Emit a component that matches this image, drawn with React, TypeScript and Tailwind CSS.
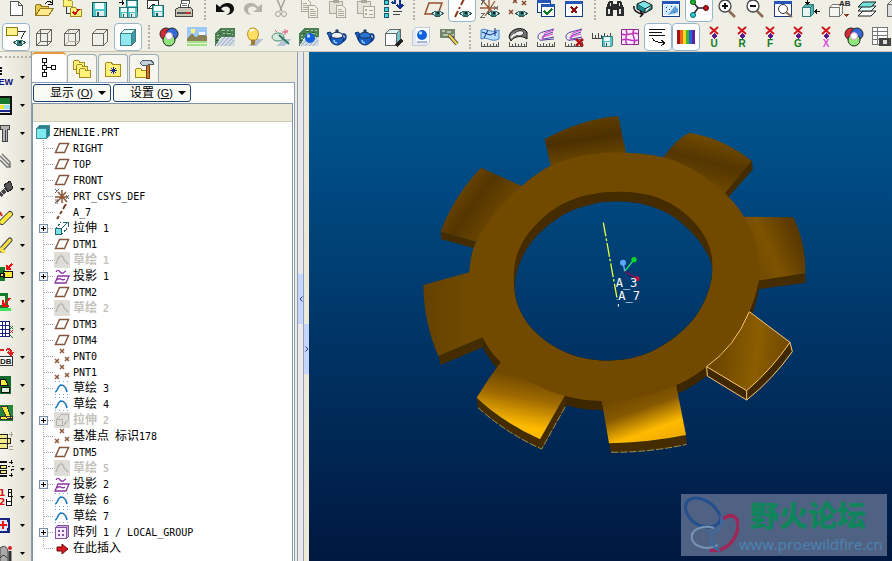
import React from 'react';

type Point = [number, number];

interface ToolItem {
  label: string;
  icon: React.ReactNode;
  active?: boolean;
}

interface TreeItem {
  label: string;
  kind: string;
  expandable?: boolean;
  muted?: boolean;
}

// Shared pieces of the toolbar drawings

const Eye = () => (
  <g>
    <path d="M8 15.5L11 13h5l3 2.5-3 2.5h-5z" fill="#cfe3df" stroke="#2d5a58" />
    <path d="M11 13h5v5h-5z" fill="#2f7a78" />
    <path d="M13 14h2v2h-2z" fill="#001a1a" />
  </g>
);

const Disk = ({ x, y, s = 1 }: { x: number; y: number; s?: number }) => (
  <g transform={`translate(${x} ${y}) scale(${s})`}>
    <path d="M.5 .5h14v14h-14z" fill="#4fc6c6" stroke="#14585c" />
    <path d="M3 1h9v6H3z" fill="#f4ffff" />
    <path d="M4 9h8v5H4z" fill="#e5ecec" />
    <path d="M5 10h2v4H5z" fill="#14585c" />
  </g>
);

const Folder = ({ x, y, s = 1 }: { x: number; y: number; s?: number }) => (
  <path transform={`translate(${x} ${y}) scale(${s})`} d="M.5 9.5v-8l1-1h4l1 1.5h5v7.5z" fill="#fff27a" stroke="#a58a1c" />
);

const Ruler = () => <path d="M1.5 15v4.5h17V15M4.5 17v2M7.5 16v3M10.5 17v2M13.5 16v3M16.5 17v2" fill="none" stroke="#555" />;

const Texture = () => (
  <g>
    <path d="M0 20V6l5-5h15v9H6z" fill="#4c7f55" />
    <path d="M6 10h14v9H1z" fill="#d5dde8" />
    <path d="M2 19l8-9M6 19l8-9M10 19l8-9M14 19l5-6" stroke="#98a6bb" shapeRendering="auto" />
    <path d="M7 3h3M12 3h2M16 3h2M8 6h2M12 6h4M2 8h2M2 11h2M17 7h1" stroke="#a3cb93" />
    <path d="M8 4h2M13 5h3M4 6h2M10 8h2M1 13h2" stroke="#2a5936" />
  </g>
);

const Cube = ({ fill = 'none', top = 'none', side = 'none', stroke = '#666' }) => (
  <g stroke={stroke}>
    <path d="M2.5 6.5h11v12h-11z" fill={fill} />
    <path d="M2.5 6.5l4-4h11l-4 4z" fill={top} />
    <path d="M13.5 18.5l4-4v-12l-4 4z" fill={side} />
  </g>
);

const Ball = ({ x, y, r = 5 }: { x: number; y: number; r?: number }) => (
  <g shapeRendering="auto">
    <circle cx={x} cy={y} r={r} fill="#1262e0" />
    <circle cx={x - 1.5} cy={y - 2} r={r / 3} fill="#b7dcff" />
  </g>
);

const Teapot = ({ lid = '#2a74d4' }: { lid?: string }) => (
  <g shapeRendering="auto">
    <path d="M5 15C2 13 3 10 0 6l3-1c2 1 2 3 3 4z" fill="#1960c9" stroke="#0a2c66" />
    <path d="M14 8c5-3 7 3 1 7" fill="none" stroke="#0e3f95" strokeWidth="2" />
    <ellipse cx="10" cy="12" rx="6.5" ry="6" fill="#1960c9" stroke="#0a2c66" />
    <path d="M4 9c1-5 11-5 12 0-2 3-10 3-12 0z" fill={lid} stroke="#1b2d4e" />
    <circle cx="10" cy="4" r="1.8" fill="#24406e" />
    <path d="M7 13c0 2 1 3 3 3" stroke="#8fcaff" strokeWidth="1.5" fill="none" />
  </g>
);

const ColorRings = () => (
  <g shapeRendering="auto" stroke="#222">
    <circle cx="7" cy="7" r="6" fill="#d52b35" />
    <circle cx="13" cy="7" r="6" fill="#3467d8" />
    <circle cx="10" cy="13" r="6" fill="#8ce67a" />
    <circle cx="10" cy="9" r="3.5" fill="#fff" stroke="#d6a5c9" />
  </g>
);

const Flow = () => (
  <g shapeRendering="auto" fill="none">
    <path d="M18 2L7 5C3 6 2 8 2 10s2 4 5 3l11-1M17 5L9 8c-3 1-4 4-1 4l10-2" stroke="#4a3ea8" />
    <path d="M17 7L7 10M18 3l-9 3-3 7" stroke="#e23adf" />
  </g>
);

const Magnifier = ({ sign }: { sign: string }) => (
  <g shapeRendering="auto" fill="none">
    <path d="M12 13l6 6" stroke="#8c6a4f" strokeWidth="2.5" />
    <circle cx="8" cy="8" r="6" fill="#fff" stroke="#444" strokeWidth="1.3" />
    <path d={sign} stroke="#111" strokeWidth="2" />
  </g>
);

const Window = () => (
  <g>
    <path d="M1.5 3.5h17v15h-17z" fill="#fff" stroke="#173d86" />
    <path d="M1 3h18v3H1z" fill="#2356b8" />
  </g>
);

const DragMark = ({ letter, color }: { letter: string; color: string }) => (
  <g>
    <path d="M6 0l8 7M14 0L6 7" stroke="#d3141c" strokeWidth="2" shapeRendering="auto" />
    <path d="M10 6l3 3-3 3-3-3z" fill="#5b1a8b" />
    <text x="10" y="20" textAnchor="middle" fontSize="10" fontWeight="bold" fontFamily="Liberation Sans" fill={color}>{letter}</text>
  </g>
);

const Sheet = ({ x, y }: { x: number; y: number }) => (
  <g transform={`translate(${x} ${y})`} stroke="#aaa89b">
    <path d="M.5 .5h6l3 3v9h-9z" fill="#f2f1e8" />
    <path d="M2 4.5h4M2 6.5h6M2 8.5h6M2 10.5h6" />
  </g>
);

const fileTools: ToolItem[] = [
  { label: 'New', icon: <path d="M4.5 3.5h8l4 4v10h-12zM12.5 3.5v4h4" fill="#fff" stroke="#555" /> },
  {
    label: 'Open',
    icon: (
      <g>
        <path d="M1.5 17.5v-10l1-1h4l1 2h7v9z" fill="#e6c84e" stroke="#95761a" />
        <path d="M1.5 17.5l5-7h13l-5 7z" fill="#ffe98a" stroke="#95761a" />
        <path d="M11 6c2-3 5-3 7-1M18 2v4h-4" stroke="#111" fill="none" />
      </g>
    ),
  },
  {
    label: 'Set working directory',
    icon: (
      <g>
        <Folder x={1} y={1} s={0.8} />
        <path d="M4.5 9v6.5H8" stroke="#333" fill="none" />
        <Folder x={8} y={9} />
        <path d="M11 14l2 2 4-5" stroke="#c4161c" strokeWidth="2" fill="none" />
      </g>
    ),
  },
  { label: 'Save', icon: <Disk x={2} y={4} /> },
  {
    label: 'Save all',
    icon: (
      <g>
        <Disk x={8} y={2} s={0.8} />
        <Disk x={1} y={9} s={0.7} />
        <Disk x={9} y={9} s={0.7} />
        <path d="M1 4h5M4 2v5M6 4L4 7" stroke="#111" />
      </g>
    ),
  },
  {
    label: 'Save a copy',
    icon: (
      <g>
        <path d="M1.5 2.5h11v8h-11z" fill="#fff" stroke="#333" />
        <path d="M3 10l4-4 3 2" fill="none" stroke="#333" />
        <Disk x={6} y={7} s={0.8} />
      </g>
    ),
  },
  {
    label: 'Print',
    icon: (
      <g>
        <path d="M6.5 10l1-8h8l-1 8z" fill="#fff" stroke="#555" />
        <path d="M8 5h5M8 7h5" stroke="#777" />
        <path d="M1.5 18.5v-7l3-2h12l2 2v7z" fill="#c9c6b8" stroke="#444" />
        <path d="M3 14h14v2H3z" fill="#555" />
        <path d="M12 14h4v2h-4z" fill="#d8262a" />
      </g>
    ),
  },
];

const editTools: ToolItem[] = [
  { label: 'Undo', icon: <path d="M1 6v8h9l-4-3c3-4 9-3 9 1 0 3-2 4-4 5 5 0 8-3 8-6 0-7-10-8-14-2z" fill="#111" shapeRendering="auto" /> },
  { label: 'Redo', icon: <path d="M19 6v8h-9l4-3C11 7 5 8 5 12c0 3 2 4 4 5-5 0-8-3-8-6C1 4 11 3 15 9z" fill="#b5b3a8" shapeRendering="auto" /> },
  {
    label: 'Cut',
    icon: (
      <g stroke="#a5a399" fill="none" shapeRendering="auto">
        <path d="M6 1l5 12M14 1L9 13" strokeWidth="1.5" />
        <circle cx="7" cy="16" r="2.5" />
        <circle cx="13" cy="16" r="2.5" />
      </g>
    ),
  },
  { label: 'Copy', icon: <g><Sheet x={2} y={1} /><Sheet x={9} y={7} /></g> },
  {
    label: 'Paste',
    icon: (
      <g>
        <path d="M2.5 3.5h13v12h-13z" fill="#e4e2d6" stroke="#aaa89b" />
        <path d="M6 2h6v3H6z" fill="#aaa89b" />
        <Sheet x={9} y={7} />
      </g>
    ),
  },
  {
    label: 'Paste special',
    icon: (
      <g>
        <path d="M2.5 3.5h13v12h-13z" fill="#e4e2d6" stroke="#aaa89b" />
        <path d="M8.5 8.5h11v11h-11z" fill="#f2f1e8" stroke="#aaa89b" />
        <path d="M6 2h6v3H6zM10 11h2v2h-2zM10 15h2v2h-2z" fill="#aaa89b" />
        <path d="M14 12h4M14 16h4" stroke="#aaa89b" />
      </g>
    ),
  },
  {
    label: 'Regenerate',
    icon: (
      <g>
        <path d="M1.5 2.5h4v4h-4zM1.5 9.5h4v4h-4zM1.5 15.5h4v4h-4z" fill="#3fd3dc" stroke="#175a70" />
        <path d="M9 5h3V2M17 2v5h3M11 6l-2-2M14 7l3 3 3-3" stroke="#15318f" strokeWidth="2" fill="none" />
        <path d="M10 13.5h9M10 16.5h7" stroke="#444" />
      </g>
    ),
  },
];

const datumTools: ToolItem[] = [
  { label: 'Datum planes', icon: <g><path d="M5 5h13l-4 11H1z" fill="none" stroke="#9a4f2c" strokeWidth="1.5" shapeRendering="auto" /><Eye /></g> },
  { label: 'Datum axes', active: true, icon: <g><path d="M12 1L9 7M8 9l-1 2M6 13l-3 6" stroke="#8a3e1e" strokeWidth="2" shapeRendering="auto" /><Eye /></g> },
  {
    label: 'Coordinate systems',
    icon: (
      <g>
        <path d="M3 3l12 14M15 3L5 18M0 10h18M9 2v14" stroke="#9a5a38" strokeWidth="1.3" shapeRendering="auto" />
        <path d="M1 1l2 3M5 1L1 7M14 8l4 4M18 8l-4 4M1 15h4l-4 4h4" stroke="#666" fill="none" />
        <Eye />
      </g>
    ),
  },
  {
    label: 'Datum points',
    icon: (
      <g>
        <path d="M5 1l4 4M9 1L5 5M14 3l4 4M18 3l-4 4M1 12l4 4M5 12l-4 4" stroke="#8a4a2a" strokeWidth="1.5" shapeRendering="auto" />
        <Eye />
      </g>
    ),
  },
  {
    label: 'Activate window',
    icon: (
      <g>
        <path d="M1.5 2.5h13v12h-13z" fill="#fff" stroke="#173d86" />
        <path d="M1 2h14v3H1z" fill="#2356b8" />
        <path d="M5.5 6.5h13v12h-13z" fill="#fff" stroke="#173d86" />
        <path d="M5 6h14v3H5z" fill="#2356b8" />
        <path d="M8 13l3 3 5-5" fill="none" stroke="#127a22" strokeWidth="2" />
      </g>
    ),
  },
  { label: 'Close window', icon: <g><Window /><path d="M7 9l6 6M13 9l-6 6" stroke="#8f1010" strokeWidth="2" /></g> },
];

const viewTools: ToolItem[] = [
  {
    label: 'Find',
    icon: (
      <g>
        <path d="M1 18V10l3-7h4v3h4V3h4l3 7v8h-7v-6H8v6z" fill="#2b2b2b" />
        <path d="M3 11h2v5H3zM14 11h2v5h-2zM5 5h1v3H5zM14 5h1v3h-1z" fill="#dfe6e6" />
      </g>
    ),
  },
  {
    label: 'Spin center',
    icon: (
      <g shapeRendering="auto">
        <path d="M4 6l7-3 8 4-7 4z" fill="#7fe6e8" stroke="#111" />
        <path d="M4 6v5l8 4V11M12 15l7-4V7" fill="#1a8e98" stroke="#111" />
        <path d="M1 8c-1 4 3 7 8 8M7 13l3 3-3 3" fill="none" stroke="#111" strokeWidth="1.5" />
      </g>
    ),
  },
  {
    label: 'Repaint',
    icon: (
      <g>
        <Window />
        <path d="M3 7h14v10H3z" fill="#d6ecff" />
        <path d="M7 17l7-9 3 3v3z" fill="#5a9fd8" shapeRendering="auto" />
        <path d="M5 9h1M8 11h1M5 13h1M10 8h1M13 14h1" stroke="#173d86" />
      </g>
    ),
  },
  {
    label: 'Orientation center',
    active: true,
    icon: (
      <g shapeRendering="auto">
        <path d="M4 4l5 6-5 7M9 10h8" stroke="#222" strokeWidth="1.5" fill="none" />
        <circle cx="4" cy="4" r="2.5" fill="#1cb62c" stroke="#0a5312" />
        <circle cx="4" cy="17" r="2.5" fill="#24cfd8" stroke="#0c5f66" />
        <circle cx="17" cy="10" r="2.5" fill="#c3161c" stroke="#5c0a0c" />
      </g>
    ),
  },
  { label: 'Zoom in', icon: <Magnifier sign="M5 8h6M8 5v6" /> },
  { label: 'Zoom out', icon: <Magnifier sign="M5 8h6" /> },
  {
    label: 'Refit',
    icon: (
      <g>
        <Window />
        <g shapeRendering="auto">
          <circle cx="10" cy="11" r="4.5" fill="#fff" stroke="#333" />
          <path d="M13 14l6 5" stroke="#8c6a4f" strokeWidth="2" />
        </g>
      </g>
    ),
  },
  {
    label: 'Reorient',
    icon: (
      <g>
        <path d="M1.5 9.5h8v9h-8z" fill="#e9f5f5" stroke="#2a7a7a" />
        <path d="M1.5 9.5l3-3h8l-3 3zM9.5 18.5l3-3v-9l-3 3z" fill="#5cb5b5" stroke="#2a7a7a" />
        <path d="M6.5 1v5M4.5 4l2 2 2-2M19 13.5h-5M16 11.5l-2 2 2 2" stroke="#111" fill="none" />
      </g>
    ),
  },
  {
    label: 'Saved views',
    icon: (
      <g>
        <path d="M.5 9.5h10v9h-10zM.5 9.5l3-3h10v9l-3 3" fill="#f5f5f2" stroke="#777" />
        <text x="10" y="8" fontSize="8" fontWeight="bold" fontFamily="Liberation Sans" fill="#222">AB</text>
        <path d="M15 16h5l-2.5 3z" fill="#8a3e1e" />
      </g>
    ),
  },
  {
    label: 'Layers',
    icon: (
      <g stroke="#222" shapeRendering="auto">
        <path d="M1 18l5-5h13l-5 5z" fill="#fff" />
        <path d="M1 13l5-5h13l-5 5z" fill="#dff" />
        <path d="M1 9l5-5h13l-5 5z" fill="#6fe0dc" />
      </g>
    ),
  },
  { label: 'View manager', icon: <Cube fill="#ddd" /> },
];

const displayTools: ToolItem[] = [
  {
    label: 'Annotation display',
    active: true,
    icon: (
      <g>
        <path d="M.5 .5h11v8H.5z" fill="#fff48c" stroke="#8c7c12" />
        <path d="M12 4.5h7l-4 7" stroke="#333" fill="none" />
        <Eye />
      </g>
    ),
  },
  { label: 'Wireframe', icon: <g><Cube /><path d="M6.5 2.5v12h11M6.5 14.5l-4 4" stroke="#666" fill="none" /></g> },
  { label: 'Hidden line', icon: <g><Cube /><path d="M6.5 2.5v12h11M6.5 14.5l-4 4" stroke="#b0aea2" fill="none" /></g> },
  { label: 'No hidden', icon: <Cube /> },
  { label: 'Shading', active: true, icon: <Cube fill="#8fe9ee" top="#e8ffff" side="#3a99a3" stroke="#3f7f88" /> },
];

const renderTools: ToolItem[] = [
  { label: 'Appearance', icon: <ColorRings /> },
  {
    label: 'Scene',
    icon: (
      <g>
        <path d="M0 0h20v12H0z" fill="#9cc9f5" />
        <path d="M0 11l5-4 4 3 6-5 5 5v4H0z" fill="#8a8256" />
        <path d="M0 14h20v6H0z" fill="#a6dd88" />
        <path d="M0 16h20M0 19h20" stroke="#e5f7d8" />
        <circle cx="6" cy="4" r="2.5" fill="#fff27a" />
        <path d="M12 5h6v3h-6z" fill="#f3f7fb" />
      </g>
    ),
  },
  { label: 'Room', icon: <Texture /> },
  {
    label: 'Lights',
    icon: (
      <g>
        <path d="M5 19l7-7h8l-7 7z" fill="#b7c4d8" />
        <g shapeRendering="auto">
          <path d="M7 13c-4-4-3-12 3-12s7 8 3 12z" fill="#ffe067" stroke="#b98b17" />
          <path d="M8 13h4v5H8z" fill="#a17a35" />
          <path d="M7 4c1-1 2-2 4-1" stroke="#fff" fill="none" strokeWidth="2" />
        </g>
      </g>
    ),
  },
  {
    label: 'Effects',
    icon: (
      <g>
        <path d="M5 19l7-7h8l-7 7z" fill="#b7c4d8" />
        <g shapeRendering="auto">
          <ellipse cx="7" cy="10" rx="6" ry="4" fill="#d6eadb" stroke="#498a73" />
          <path d="M8 8l10 9" stroke="#2f7a66" strokeWidth="2" />
          <path d="M14 2v6M11 5h6M4 3l2 2M17 3l-2 2" stroke="#db5b78" />
        </g>
      </g>
    ),
  },
  { label: 'Render room', icon: <g><Texture /><Ball x={11} y={11} r={5} /></g> },
  { label: 'Render setup', icon: <Teapot lid="#f2f4f6" /> },
  { label: 'Render window', icon: <Teapot /> },
  { label: 'Perspective', icon: <g><Cube fill="#fff" top="#d9f4f6" side="#6fc4cb" /><path d="M13 19l6-6" stroke="#222" strokeWidth="3" /></g> },
  {
    label: 'Real time',
    icon: (
      <g>
        <path d="M1.5 3.5l3-3h14v15l-3 3h-14z" fill="#e6e9ef" stroke="#c5cbd6" />
        <path d="M5 1h13v14H5z" fill="#fbfcff" />
        <Ball x={11} y={8} r={5} />
        <path d="M6 15h10" stroke="#a3b7d8" strokeWidth="2" />
      </g>
    ),
  },
  {
    label: 'Image editor',
    icon: (
      <g>
        <path d="M1 2h15v9H1z" fill="#73856c" />
        <path d="M3 4h3M8 5h4M4 8h5M12 8h3" stroke="#b9c6aa" strokeWidth="2" />
        <path d="M10 8l8 9" stroke="#444" strokeWidth="4" shapeRendering="auto" />
        <path d="M10 8l8 9" stroke="#f2d648" strokeWidth="2" shapeRendering="auto" />
      </g>
    ),
  },
];

const analysisTools: ToolItem[] = [
  {
    label: 'Curvature',
    icon: (
      <g>
        <path d="M1 3c5-3 8 4 18 0v9c-8 4-11-3-18 0z" fill="#b5dbff" stroke="#4782c9" shapeRendering="auto" />
        <path d="M4 11l4-8M2 5l8 3 7-3M15 1v8" stroke="#11307a" fill="none" shapeRendering="auto" />
        <Ruler />
      </g>
    ),
  },
  {
    label: 'Reflection',
    icon: (
      <g>
        <g shapeRendering="auto">
          <path d="M1 10c1-9 14-11 18-5v7c-5-4-13-3-16 2z" fill="#777" stroke="#111" />
          <path d="M7 6c3-3 8-3 9 0-3 4-7 4-9 0z" fill="#eee" stroke="#333" />
          <path d="M3 11c2-3 4-4 7-4" stroke="#eee" strokeWidth="2" fill="none" />
        </g>
        <Ruler />
      </g>
    ),
  },
  { label: 'Sections', icon: <g><Flow /><Ruler /></g> },
  { label: 'Delete sections', icon: <g><Flow /><Ruler /><path d="M12 12l7 7M19 12l-7 7" stroke="#b31217" strokeWidth="2.5" shapeRendering="auto" /></g> },
  { label: 'Saved analysis', icon: <g><path d="M.5 6v5.5h18V6M3.5 8v3M6.5 6v5M9.5 8v3M12.5 6v5M15.5 8v3" stroke="#444" fill="none" /><Disk x={10} y={9} s={0.7} /></g> },
  {
    label: 'Mesh',
    icon: (
      <g fill="none" shapeRendering="auto">
        <path d="M1.5 2.5h17v15h-17z" fill="#f7eef9" stroke="#8b2a8f" />
        <path d="M6 3c3 5-3 9 1 14M14 3c-4 5 3 8 0 14M2 7c5 3 11-3 16 0M2 13c6-3 10 3 16 0" stroke="#bd35c0" strokeWidth="1.5" />
      </g>
    ),
  },
  { label: 'Wrap', active: true, icon: <path d="M1 2.5h16M1 5.5h13M1 8.5h16M4 11c2 4 6 5 13 5M13 13l4 3-4 3" fill="none" stroke="#111" /> },
  {
    label: 'Spectrum',
    active: true,
    icon: (
      <g>
        <path d="M1 3h3v14H1z" fill="#a31515" />
        <path d="M4 3h3v14H4z" fill="#f0641e" />
        <path d="M7 3h3v14H7z" fill="#f5d821" />
        <path d="M10 3h3v14h-3z" fill="#43b535" />
        <path d="M13 3h3v14h-3z" fill="#2464d6" />
        <path d="M16 3h3v14h-3z" fill="#5c2499" />
      </g>
    ),
  },
  { label: 'U', icon: <DragMark letter="U" color="#137a1b" /> },
  { label: 'R', icon: <DragMark letter="R" color="#137a1b" /> },
  { label: 'F', icon: <DragMark letter="F" color="#137a1b" /> },
  { label: 'G', icon: <DragMark letter="G" color="#137a1b" /> },
  { label: 'X', icon: <DragMark letter="X" color="#d94fe0" /> },
  { label: 'Colors', icon: <ColorRings /> },
  {
    label: 'Snapshot table',
    icon: (
      <g>
        <path d="M.5 .5h15v17H.5zM.5 4.5h15M.5 8.5h15M.5 12.5h15M5.5 1v17" fill="#fff" stroke="#777" />
        <path d="M7 11h12v8H7z" fill="#444" />
        <circle cx="13" cy="15" r="2.5" fill="#ddd" />
      </g>
    ),
  },
];

// Left column; the drawings run under the window edge on the left
const sideTools: ToolItem[] = [
  {
    label: 'New part',
    icon: (
      <g>
        <path d="M0 1h2M0 4h2M0 7h2" stroke="#111" strokeWidth="2" />
        <text x="-8" y="18" fontSize="9" fontWeight="bold" fontFamily="Liberation Sans" fill="#10107a">NEW</text>
      </g>
    ),
  },
  { label: 'Mold base', icon: <g><path d="M0 2h12M0 19h12M11 2v17" stroke="#111" strokeWidth="2" /><path d="M0 3h10v6H0z" fill="#157a2c" /><path d="M0 10h4v4H0z" fill="#f2e13a" /><path d="M4 10h6v4H4z" fill="#90e0ee" /><path d="M0 15h10v2H0z" fill="#1b2a8f" /></g> },
  { label: 'Screw', icon: <path d="M.5 2.5h9v4h-2v12h-5v-12h-2zM5.5 7v11" fill="#b5b5b5" stroke="#444" /> },
  { label: 'Pins', icon: <path d="M0 5l10 10M0 9l7 7M2 3l8 8M10 11v5H6" fill="none" stroke="#777" strokeWidth="1.5" shapeRendering="auto" /> },
  { label: 'Bolt', icon: <g><path d="M0 17l7-8" stroke="#444" strokeWidth="4" /><path d="M4 6l6-4 3 7-5 4z" fill="#555" stroke="#222" /><path d="M1 13l3 3M4 10l3 3" stroke="#bbb" /></g> },
  { label: 'Ejector', icon: <g shapeRendering="auto"><path d="M2 15l8-8" stroke="#444" strokeWidth="6" strokeLinecap="round" /><path d="M2 15l8-8" stroke="#ffe93b" strokeWidth="4" strokeLinecap="round" /><path d="M0 5l2 4" stroke="#d23418" strokeWidth="2" /></g> },
  { label: 'Sleeve', icon: <g shapeRendering="auto"><path d="M1 15l9-10" stroke="#444" strokeWidth="5" strokeLinecap="round" /><path d="M0 14l4 3M1 15l9-10" stroke="#f5e048" strokeWidth="3" strokeLinecap="round" /></g> },
  { label: 'Locating ring', icon: <g><path d="M0 4h5v14H0z" fill="#157a2c" /><path d="M3.5 8.5h9v6h-9zM0 10.5h4v3H0z" fill="#ffe93b" stroke="#111" /><path d="M12 1L7 6M7 2v4h4" stroke="#e11" strokeWidth="2" fill="none" /></g> },
  { label: 'Cooling', icon: <g><path d="M0 2h8v16H0z" fill="#157a2c" /><path d="M0 5h5v9H0z" fill="#f1f4e4" /><path d="M0 17h11v3H0z" fill="#42e05b" /><path d="M10 7l-6 7M3 9v6h6" stroke="#e11" strokeWidth="2" fill="none" /></g> },
  { label: 'Drawing grid', icon: <g><path d="M0 2.5h9v15H0M0 6.5h9M0 10.5h9M0 14.5h9M2.5 2v15M5.5 2v15" fill="#fff" stroke="#1a2380" /><path d="M10 7l3 3M13 7l-3 3M10 16l3 3" stroke="#157a2c" /><path d="M10 11l3 3M13 11l-3 3" stroke="#c22" /></g> },
  { label: 'Database', icon: <g><path d="M0 3h4M6 3c4-2 6 1 5 4M8 5l3 3 2-3" stroke="#d22" strokeWidth="2" fill="none" /><path d="M-2.5 9.5h15v9h-15z" fill="#fff" stroke="#333" /><text x="0" y="17" fontSize="8" fontFamily="Liberation Sans" fontWeight="bold" fill="#111">DB</text></g> },
  { label: 'Slider', icon: <g><path d="M0 1h11v18H0z" fill="#146b2b" /><path d="M0 4h5l3 6H0z" fill="#ffe93b" stroke="#111" /><path d="M1.5 12.5h8v5h-8z" fill="#dfeee0" stroke="#111" /></g> },
  { label: 'Lifter', icon: <g><path d="M0 2h13v16H0z" fill="#25853a" /><path d="M1 3h6l4 12H7zM0 13h12v3H0z" fill="#ffe93b" stroke="#333" /></g> },
  { label: 'Opening', icon: <g><path d="M0 3.5h7v14H0M0 7.5h10v5H0" fill="#f2e98a" stroke="#222" /><path d="M9 3h4M11 1v5M9 15h4M9 18h4" stroke="#aaa58c" /></g> },
  { label: 'Check', icon: <g><path d="M0 3h7M0 17h7" stroke="#111" strokeWidth="2" /><path d="M0 6.5h6v3H0zM0 11.5h6v3H0z" fill="#f5ea79" stroke="#111" /><path d="M9 3h4M11 1v4M8 7h2M12 7h2v3h-3v2M9 16h4M11 14v4" stroke="#111" fill="none" /></g> },
  { label: 'Numbering', icon: <g><text x="-1" y="9" fontSize="9" fontWeight="bold" fontFamily="DejaVu Sans" fill="#d11">1</text><text x="-1" y="18" fontSize="9" fontWeight="bold" fontFamily="DejaVu Sans" fill="#d11">2</text><path d="M6.5 11.5v7h5v-16h-3v7h4M7 14.5h5M8 5.5h4" fill="#fff" stroke="#111" /></g> },
  { label: 'Layout', icon: <g><path d="M0 3.5h9v13H0" fill="#dfe5ff" stroke="#1a2380" strokeWidth="2" /><path d="M0 10h7M3 6v8" stroke="#e11" strokeWidth="2" /><path d="M7 4h3v3H7zM7 13h3v3H7z" fill="#1a2380" /></g> },
  { label: 'Options', icon: <g shapeRendering="auto"><path d="M0 5c5-4 8 0 8 5v9H0z" fill="#aaa" stroke="#444" /><path d="M10 8v11" stroke="#333" strokeWidth="3" /><circle cx="10" cy="5" r="2" fill="#d22" /><path d="M0 15c3-4 5-3 7 0" stroke="#333" fill="none" /></g> },
];

const treeIcons: Record<string, React.ReactNode> = {
  plane: <path d="M5.5 3.5h9l-4 9h-9z" fill="none" stroke="#85583d" strokeWidth="1.5" shapeRendering="auto" />,
  csys: <g shapeRendering="auto"><path d="M1 9h13M8 2v13M4 4l9 10M12 4L3 14" stroke="#8c5636" strokeWidth="1.5" /><path d="M1 1l2 2M5 1L1 5M12 7l3 4M15 7l-3 4M1 12h3l-3 3h3" stroke="#666" fill="none" /></g>,
  axis: <path d="M12 0l-3 5M8 7L6 10M5 12l-2 3" stroke="#7a4428" strokeWidth="2" shapeRendering="auto" />,
  extrude: <g><path d="M1.5 8.5h6v6h-6z" fill="#79e3e6" stroke="#28626b" /><path d="M2 8l5-6M8 14l6-7" stroke="#28626b" strokeDasharray="2 1" /><path d="M8 8l6-6M9 2h5v5" stroke="#28626b" fill="none" /></g>,
  sketchOff: <g><path d="M0 0h16v16H0z" fill="#deddd8" /><path d="M2 12c3-10 7-10 8-4l4 4" stroke="#bab9b4" fill="none" strokeWidth="1.5" shapeRendering="auto" /></g>,
  extrudeOff: <g><path d="M0 0h16v16H0z" fill="#deddd8" /><path d="M2.5 7.5h6v6h-6zM3 7l5-5h6v6l-5 6" stroke="#b4b3ae" fill="none" /></g>,
  project: <g shapeRendering="auto" fill="none" stroke="#8a35a3" strokeWidth="1.3"><path d="M2 4c3-5 4 3 7 1l3-2" /><path d="M4 8h11l-3 7H1z" /><path d="M3 12c3-4 4 2 8-1" /></g>,
  points: <path d="M6 1l4 4M10 1L6 5M1 11l4 4M5 11l-4 4M11 9l4 4M15 9l-4 4" stroke="#8c5a3a" strokeWidth="1.5" shapeRendering="auto" />,
  sketch: <g><path d="M1 1.5h14M1 14.5h14" stroke="#73a9c9" strokeDasharray="1 3" /><path d="M1 12c3 0 2-6 6-7 3 0 5 2 6 7" stroke="#1677b8" fill="none" strokeWidth="1.5" shapeRendering="auto" /></g>,
  pattern: <g><path d="M1.5 3.5l2-2h11v11l-2 2v-11z" fill="#c9a8dc" stroke="#8054a0" /><path d="M1.5 3.5h11v11h-11z" fill="#f6e9fa" stroke="#8054a0" /><path d="M4 6h2v2H4zM8 6h2v2H8zM4 10h2v2H4zM8 10h2v2H8z" fill="#8054a0" /></g>,
  insert: <path d="M3 7h5V4l6 5-6 5v-3H3z" fill="#d61a1f" stroke="#6e0b0d" shapeRendering="auto" />,
};

const treeItems: TreeItem[] = [
  { label: 'RIGHT', kind: 'plane' },
  { label: 'TOP', kind: 'plane' },
  { label: 'FRONT', kind: 'plane' },
  { label: 'PRT_CSYS_DEF', kind: 'csys' },
  { label: 'A_7', kind: 'axis' },
  { label: '拉伸 1', kind: 'extrude', expandable: true },
  { label: 'DTM1', kind: 'plane' },
  { label: '草绘 1', kind: 'sketchOff', muted: true },
  { label: '投影 1', kind: 'project', expandable: true },
  { label: 'DTM2', kind: 'plane' },
  { label: '草绘 2', kind: 'sketchOff', muted: true },
  { label: 'DTM3', kind: 'plane' },
  { label: 'DTM4', kind: 'plane' },
  { label: 'PNT0', kind: 'points' },
  { label: 'PNT1', kind: 'points' },
  { label: '草绘 3', kind: 'sketch' },
  { label: '草绘 4', kind: 'sketch' },
  { label: '拉伸 2', kind: 'extrudeOff', expandable: true, muted: true },
  { label: '基准点 标识178', kind: 'points' },
  { label: 'DTM5', kind: 'plane' },
  { label: '草绘 5', kind: 'sketchOff', muted: true },
  { label: '投影 2', kind: 'project', expandable: true },
  { label: '草绘 6', kind: 'sketch' },
  { label: '草绘 7', kind: 'sketch' },
  { label: '阵列 1 / LOCAL_GROUP', kind: 'pattern', expandable: true },
  { label: '在此插入', kind: 'insert' },
];

const ToolButton: React.FC<ToolItem> = ({ label, icon, active }) => (
  <button
    aria-label={label}
    className={`flex h-7 w-7 shrink-0 items-center justify-center rounded-sm ${active ? 'border border-[#98b5cc] bg-white' : ''}`}
  >
    <svg viewBox="0 0 20 20" className="h-5 w-5 shrink-0 overflow-visible" shapeRendering="crispEdges">{icon}</svg>
  </button>
);

const ToolRow: React.FC<{ groups: ToolItem[][]; className: string }> = ({ groups, className }) => (
  <div className={`flex items-end overflow-hidden pl-0.5 ${className}`}>
    {groups.map((group, index) => (
      <React.Fragment key={index}>
        {index > 0 && (
          <div className="flex h-7 w-[13px] shrink-0 items-center justify-center">
            <div className="h-6 border-l-2 border-dotted border-[#b4b2a6]" />
          </div>
        )}
        {group.map((item) => <ToolButton key={item.label} {...item} />)}
      </React.Fragment>
    ))}
  </div>
);

// Latin runs are set smaller so that two of them take the width of one Han character
const MixedText = ({ text }: { text: string }) => (
  <>
    {text.split(/([\u4e00-\u9fff]+)/).map((part, index) => (
      <span key={index} className={index % 2 ? 'text-[12px]' : 'text-[10px]'}>{part}</span>
    ))}
  </>
);

const TreeRow: React.FC<{ item: TreeItem; last: boolean }> = ({ item, last }) => (
  <li className="flex h-4 items-center pl-1.5">
    {item.expandable ? (
      <button aria-label={`Expand ${item.label}`} className="h-4 w-[15px] shrink-0">
        <svg viewBox="0 0 15 16" className="h-4 w-[15px]" shapeRendering="crispEdges">
          <path d="M4.5 0v16M9 8.5h6" stroke="#a9a9a9" strokeDasharray="1 1" />
          <path d="M.5 4.5h8v8h-8z" fill="#eef1f5" stroke="#7b8ea6" />
          <path d="M2 8.5h5M4.5 6v5" stroke="#000" />
        </svg>
      </button>
    ) : (
      <svg viewBox="0 0 15 16" className="h-4 w-[15px] shrink-0" shapeRendering="crispEdges">
        <path d={last ? 'M4.5 0v8M5 8.5h10' : 'M4.5 0v16M5 8.5h10'} stroke="#a9a9a9" strokeDasharray="1 1" fill="none" />
      </svg>
    )}
    <svg viewBox="0 0 16 16" className="h-4 w-4 shrink-0" shapeRendering="crispEdges">{treeIcons[item.kind]}</svg>
    <span className={`whitespace-pre pl-[3px] leading-4 ${item.muted ? 'font-bold text-[#c3c2bd]' : 'text-black'}`}>
      <MixedText text={item.label} />
    </span>
  </li>
);

const MenuButton = ({ text, hotkey }: { text: string; hotkey: string }) => (
  <button className="flex h-[18px] w-[78px] items-center justify-end gap-[3px] rounded-[3px] border border-[#1c4470] bg-[#fafaf6] pr-1 text-[12px] leading-4">
    <span>{text}</span>
    <span className="pr-0.5 font-['Liberation_Sans',sans-serif] text-[11px]">(<u>{hotkey}</u>)</span>
    <svg viewBox="0 0 8 4" className="h-1 w-2"><path d="M0 0h8L4 4z" /></svg>
  </button>
);

const tabs = [
  {
    label: 'Model tree',
    icon: <path d="M3.5 .5h4v4h-4zM3.5 7.5h4v4h-4zM3.5 14.5h4v4h-4zM12.5 7.5h4v4h-4zM5.5 5v2M5.5 12v2M8 9.5h4" fill="#fff" stroke="#111" />,
  },
  { label: 'Folder browser', icon: <g><Folder x={1} y={1} /><Folder x={4} y={5} /><Folder x={7} y={9} /></g> },
  {
    label: 'Favorites',
    icon: (
      <g>
        <path d="M2.5 17.5v-13l1-1h5l1 2h8v12z" fill="#fff07a" stroke="#a58a1c" />
        <path d="M10 8v7M7 11.500h7M8 9l5 5M13 9l-5 5" stroke="#1b2a8f" />
      </g>
    ),
  },
  {
    label: 'Connections',
    icon: (
      <g>
        <Folder x={1} y={9} />
        <path d="M12 5h3v14h-3z" fill="#c9742b" stroke="#7a3d10" />
        <path d="M6 4l3-3h8l3 4-3 1-2-1-2 2-5-1z" fill="#c3d0da" stroke="#4a5d6e" />
      </g>
    ),
  },
];

const ModelTreePanel = () => (
  <section className="flex w-[266px] shrink-0 flex-col border-l border-[#8a9fb5] bg-[#ece9d8]">
    <div className="flex items-end gap-px">
      {tabs.map((tab, index) => (
        <button
          key={tab.label}
          aria-label={tab.label}
          className={
            index === 0
              ? 'flex h-[30px] w-[34px] items-center justify-center rounded-t-sm border-t-2 border-[#e8973a] bg-white'
              : 'flex h-[28px] w-[30px] items-center justify-center rounded-t-sm border border-b-0 border-[#9aabba] bg-[#f6f5ee]'
          }
        >
          <svg viewBox="0 0 20 20" className="h-5 w-5" shapeRendering="crispEdges">{tab.icon}</svg>
        </button>
      ))}
    </div>
    <div className="mr-0.5 flex min-h-0 flex-1 flex-col border-r border-t border-[#8ea3b8] bg-white">
      <div className="flex gap-0.5 p-px">
        <MenuButton text="显示" hotkey="O" />
        <MenuButton text="设置" hotkey="G" />
      </div>
      <div className="mr-px flex min-h-0 flex-1 flex-col border border-b-0 border-[#8295a8]">
        <div className="h-[18px] shrink-0 border-b border-[#cfccba] bg-[#ebe8d6]" />
        <ul className="min-h-0 flex-1 overflow-hidden pt-0.5">
          <li className="flex h-4 items-center pl-0.5">
            <svg viewBox="0 0 16 16" className="h-4 w-4" shapeRendering="crispEdges">
              <path d="M1.5 4.5l3-3h10l-3 3zM11.5 14.5l3-3v-10l-3 3z" fill="#2f7d89" stroke="#3b8e97" />
              <path d="M1.5 4.5h10v10h-10z" fill="#7deaf0" stroke="#3b8e97" />
            </svg>
            <span className="pl-0.5 leading-4"><MixedText text="ZHENLIE.PRT" /></span>
          </li>
          {treeItems.map((item, index) => (
            <TreeRow key={item.label} item={item} last={index === treeItems.length - 1} />
          ))}
        </ul>
      </div>
    </div>
  </section>
);

// Model geometry, three units to a pixel

const smoothLoop = (points: Point[]) => {
  const at = (i: number) => points[(i + points.length) % points.length];
  let path = `M${points[0].join(' ')}`;
  points.forEach((p, i) => {
    const prev = at(i - 1);
    const next = at(i + 1);
    const after = at(i + 2);
    path += `C${p[0] + (next[0] - prev[0]) / 6} ${p[1] + (next[1] - prev[1]) / 6} ${next[0] - (after[0] - p[0]) / 6} ${next[1] - (after[1] - p[1]) / 6} ${next[0]} ${next[1]}`;
  });
  return `${path}Z`;
};

const rim = smoothLoop([
  [680, 158], [800, 174], [895, 218], [975, 280], [1032, 350], [1068, 440], [1076, 540], [1048, 635],
  [996, 725], [920, 800], [830, 855], [720, 890], [605, 903], [495, 888], [390, 846], [302, 787],
  [247, 712], [214, 620], [208, 517], [227, 428], [285, 340], [365, 258], [452, 197], [565, 164],
]);

const bore = smoothLoop([
  [342, 555], [347, 480], [374, 416], [420, 362], [482, 315], [562, 285], [655, 275], [750, 286],
  [832, 323], [893, 379], [928, 440], [937, 500], [928, 565], [896, 635], [843, 696], [775, 744],
  [705, 772], [625, 782], [540, 772], [460, 738], [395, 685], [356, 622],
]);

// What can be seen through the bore, past its inner wall
const opening = smoothLoop([
  [344, 560], [354, 503], [383, 442], [435, 384], [504, 337], [582, 311], [655, 304], [740, 315],
  [816, 347], [879, 401], [918, 454], [936, 500], [928, 565], [896, 635], [843, 696], [775, 744],
  [705, 772], [625, 782], [540, 772], [460, 738], [395, 685], [356, 622],
]);

const blades = [
  { face: 'M470 230L452 197 434 118Q540 58 655 48L678 160 670 220Z', side: '', fill: 'url(#bladeTop)' },
  { face: 'M770 210L790 172Q830 115 868 98 970 115 1055 182L975 280 940 290Z', side: 'M1055 182l4 26-74 84-14-16z', fill: 'url(#bladeTopRight)' },
  { face: 'M1000 370L1032 350 1180 352Q1218 430 1216 520L1072 542 1040 520Z', side: 'M1216 520v28l-140 20-6-28z', fill: 'url(#bladeRight)' },
  { face: 'M640 860L605 903 627 1030Q745 1028 858 1005L828 853 800 820Z', side: 'M627 1030l6 27q120 0 227-24l-2-28q-113 23-231 25z', fill: 'url(#bladeBottom)' },
  { face: 'M330 760L302 787Q262 840 230 893 310 968 420 1018L495 886 490 840Z', side: 'M230 893l4 30q90 80 191 124l72-129-2-32-75 132q-110-50-190-125z', fill: 'url(#bladeBottomLeft)' },
  { face: 'M250 520L208 517 70 555Q72 670 115 768L248 712 290 690Z', side: 'M115 768l7 27 128-54-2-29z', fill: 'url(#bladeLeft)' },
  { face: 'M390 290L365 258 243 203Q160 290 122 395L225 424 270 400Z', side: 'M122 395l2 23 97 26 6-20z', fill: 'url(#bladeTopLeft)' },
];

const GearModel = () => (
  <svg viewBox="-273 -144 1749 1527" className="h-full w-full" role="img" aria-label="ZHENLIE.PRT">
    <defs>
      <clipPath id="aroundOpening">
        <path d={`M-300-200h1900v1700H-300z${opening}`} clipRule="evenodd" />
      </clipPath>
      <linearGradient id="bladeTop" x1=".1" y1="0" x2=".3" y2="1">
        <stop offset="0" stopColor="#684300" /><stop offset=".45" stopColor="#4b3000" /><stop offset=".85" stopColor="#714a00" />
      </linearGradient>
      <linearGradient id="bladeTopRight" x1=".7" y1="0" x2=".3" y2="1">
        <stop offset="0" stopColor="#7a5000" /><stop offset=".45" stopColor="#543600" /><stop offset=".85" stopColor="#714a00" />
      </linearGradient>
      <linearGradient id="bladeRight" x1="0" y1=".7" x2="1" y2=".3">
        <stop offset=".2" stopColor="#714a00" /><stop offset=".5" stopColor="#7e5300" /><stop offset=".9" stopColor="#5a3900" />
      </linearGradient>
      <linearGradient id="bladeBottom" x1=".25" y1=".2" x2=".6" y2="1">
        <stop offset=".15" stopColor="#714a00" /><stop offset=".42" stopColor="#855800" /><stop offset=".8" stopColor="#ffbb00" /><stop offset="1" stopColor="#f2ad00" />
      </linearGradient>
      <linearGradient id="bladeBottomLeft" x1=".6" y1=".2" x2=".45" y2="1">
        <stop offset=".1" stopColor="#714a00" /><stop offset=".4" stopColor="#a06a00" /><stop offset=".8" stopColor="#ffbb00" />
      </linearGradient>
      <linearGradient id="bladeLeft" x1="0" y1="0" x2="1" y2="0">
        <stop offset="0" stopColor="#644100" /><stop offset=".6" stopColor="#714a00" />
      </linearGradient>
      <linearGradient id="bladeTopLeft" x1="0" y1=".2" x2="1" y2=".8">
        <stop offset=".1" stopColor="#714900" /><stop offset=".4" stopColor="#553600" /><stop offset=".75" stopColor="#714a00" />
      </linearGradient>
      <linearGradient id="bladePicked" x1="0" y1=".5" x2="1" y2=".6">
        <stop offset=".1" stopColor="#6c4600" /><stop offset=".6" stopColor="#8c5e00" /><stop offset="1" stopColor="#6e4700" />
      </linearGradient>
    </defs>

    <g clipPath="url(#aroundOpening)">
      <path d={rim} transform="translate(0 28)" fill="#3d2700" />
      {blades.map((blade) => (
        <g key={blade.fill}>
          <path d={blade.side} fill="#452c00" />
          <path d={blade.face} fill={blade.fill} />
        </g>
      ))}
      <path d={bore} fill="#452b00" />
      <path d={rim + bore} fill="#714a00" fillRule="evenodd" />
    </g>

    <path d="M234 923q90 80 191 124l72-129M633 1057q120 0 227-24" fill="none" stroke="#e6c44e" strokeWidth="2" strokeDasharray="22 5" />
    <path d="M920 800l2 28 118 72v-28zM1170 727l7 28q-60 84-137 145v-28z" fill="#3f2800" />
    <path d="M1048 635L1170 727Q1115 808 1040 872L920 800Q1005 740 1048 635Z" fill="url(#bladePicked)" />
    <path d="M1048 635L1170 727Q1115 808 1040 872L920 800Q1005 740 1048 635ZM920 800l2 28 118 72v-28M1040 900q77-61 137-145l-7-28" fill="none" stroke="#ffc76a" strokeWidth="3" />

    <path d="M610 368l42 232" stroke="#e4ff3c" strokeWidth="4" strokeDasharray="42 6 8 6" />
    <path d="M655 612v8" stroke="#fff" strokeWidth="3" />
    <path d="M674 514l-4-25" stroke="#68b4ff" strokeWidth="4" />
    <path d="M674 514l27-34" stroke="#2be070" strokeWidth="4" />
    <path d="M674 514l38 22" stroke="#80105a" strokeWidth="4" />
    <circle cx="669" cy="488" r="9" fill="#5aaaf8" />
    <circle cx="702" cy="479" r="8" fill="#00d822" />
    <circle cx="712" cy="536" r="7" fill="#c01040" />
    <g fill="#fff" fontFamily="DejaVu Sans Mono" fontSize="36">
      <text x="647" y="560">A_3</text>
      <text x="655" y="601">A_7</text>
    </g>
  </svg>
);

const Watermark = () => (
  <div className="absolute bottom-[5px] right-[5px] flex h-[62px] w-[206px] bg-[#4f6283]">
    <svg viewBox="0 0 58 62" className="h-[62px] w-[58px] shrink-0" fill="none">
      <path d="M39 22C34 9 18 0 8 6-1 12 8 31 25 33c9 1 15-4 15-11" stroke="#234f8c" strokeWidth="3" />
      <path d="M42 25c10-8 18 0 14 13-4 12-15 21-27 18" stroke="#a02656" strokeWidth="3.5" />
      <path d="M33 34c-12-4-24 2-22 11 2 8 16 12 26 6" stroke="#7795b7" strokeWidth="2" />
      <path d="M40 22c2 9-2 15-8 17M31 35c-3 10 0 19 8 22" stroke="#3c6ba2" strokeWidth="2" />
    </svg>
    <div className="flex flex-col whitespace-nowrap">
      <span className="pl-[11px] font-['Noto_Sans_CJK_SC',sans-serif] text-[29px] font-black leading-10 text-[#10855c]">野火论坛</span>
      <a href="#" className="font-['Open_Sans',sans-serif] text-[15px] leading-5 text-[#4d82b5]">www.proewildfire.cn</a>
    </div>
  </div>
);

const App: React.FC = () => (
  <div className="flex h-screen flex-col overflow-hidden bg-[#ece9d8] font-['DejaVu_Sans_Mono','Noto_Sans_CJK_SC',monospace] text-black">
    <header className="flex shrink-0 flex-col gap-px border-b border-[#c9c6b5] bg-[#f0efe6]">
      <ToolRow groups={[fileTools, editTools, datumTools, viewTools]} className="h-[22px]" />
      <ToolRow groups={[displayTools, renderTools, analysisTools]} className="h-7" />
    </header>

    <main className="flex min-h-0 flex-1">
      <nav className="w-[31px] shrink-0 overflow-hidden bg-gradient-to-r from-[#f4f3ec] to-[#e4e1d0] pt-1">
        <div className="mb-[5px] border-t-2 border-dotted border-[#b4b2a6]" />
        {sideTools.map((tool) => (
          <button key={tool.label} aria-label={tool.label} className="flex h-7 w-full items-center justify-between pr-1.5">
            <svg viewBox="0 0 14 20" className="h-5 w-3.5" shapeRendering="crispEdges">{tool.icon}</svg>
            <svg viewBox="0 0 5 3" className="h-[3px] w-[5px]"><path d="M0 0h5L2.5 3z" /></svg>
          </button>
        ))}
      </nav>

      <ModelTreePanel />

      <div className="w-1.5 shrink-0 border-l border-[#8d9cc4] bg-[#e9e8e2] pt-[222px]">
        <button aria-label="Collapse panel" className="flex h-[50px] w-full items-center justify-center bg-[#c5d5fb]">
          <svg viewBox="0 0 4 6" className="h-1.5 w-1"><path d="M3.5 .5L1 3l2.5 2.5" fill="none" stroke="#223a7a" /></svg>
        </button>
      </div>
      <div className="w-1.5 shrink-0 border-l border-[#8d9cc4] bg-[#ece9d8] pt-[272px]">
        <button aria-label="Expand panel" className="flex h-[50px] w-full items-center justify-center bg-[#c5d5fb]">
          <svg viewBox="0 0 4 6" className="h-1.5 w-1"><path d="M.5 .5L3 3 .5 5.5" fill="none" stroke="#223a7a" /></svg>
        </button>
      </div>

      <div className="relative min-w-0 flex-1 bg-gradient-to-b from-[#005c9a] to-[#001840]">
        <GearModel />
        <Watermark />
      </div>
    </main>
  </div>
);

export default App;
